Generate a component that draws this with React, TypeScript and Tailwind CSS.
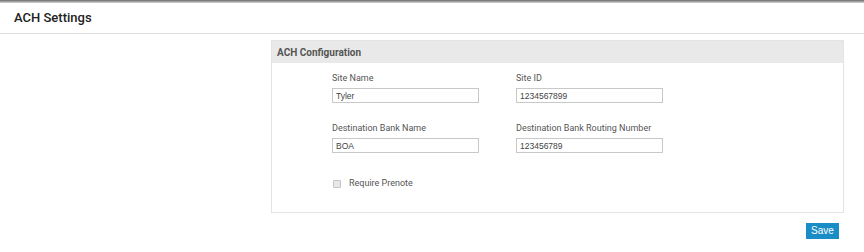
export default function App() {
  return (
    <div className="relative w-[864px] h-[252px] bg-white font-['Roboto',sans-serif] text-[#333] overflow-hidden">
      <div className="h-[3px] bg-gradient-to-b from-[#6b6b6b] to-[#d8d8d8]" />
      <div className="h-[31px] border-b border-[#dedede] flex items-center pl-[14px]">
        <h1 className="text-[13px] font-medium text-[#222]">ACH Settings</h1>
      </div>
      <div className="pl-[271px] pr-[20px] pt-[6px]">
        <div className="border border-[#e4e4e4] h-[173px]">
          <div className="h-[22px] bg-[#e9e9e9] flex items-center pl-[5px]">
            <span className="text-[10px] font-bold text-[#555]">ACH Configuration</span>
          </div>
          <div className="pl-[60px] pt-[9px]">
            <div className="grid grid-cols-[184px_184px] gap-y-[19px]">
              <Field label="Site Name" value="Tyler" />
              <Field label="Site ID" value="1234567899" />
              <Field label="Destination Bank Name" value="BOA" />
              <Field label="Destination Bank Routing Number" value="123456789" />
            </div>
            <label className="flex items-center gap-[8px] mt-[24px] pl-[1px]">
              <span className="w-[8px] h-[8px] border border-[#c4c4c4] bg-[#e8e8e8] rounded-[1px]" />
              <span className="text-[9px] text-[#555]">Require Prenote</span>
            </label>
          </div>
        </div>
        <div className="flex justify-end mt-[10px] pr-[5px]">
          <button className="w-[33px] h-[16px] bg-[#1a8dc6] text-white text-[10px] font-['Liberation_Sans',sans-serif] leading-none">
            Save
          </button>
        </div>
      </div>
    </div>
  );
}

function Field({ label, value }: { label: string; value: string }) {
  return (
    <div className="flex flex-col">
      <span className="text-[9px] text-[#555] h-[12px] leading-[12px]">{label}</span>
      <input
        readOnly
        value={value}
        className="mt-[4px] w-[147px] h-[15px] border border-[#c8c8c8] px-[3px] text-[8.5px] text-[#444] font-['Liberation_Sans',sans-serif] outline-none"
      />
    </div>
  );
}
